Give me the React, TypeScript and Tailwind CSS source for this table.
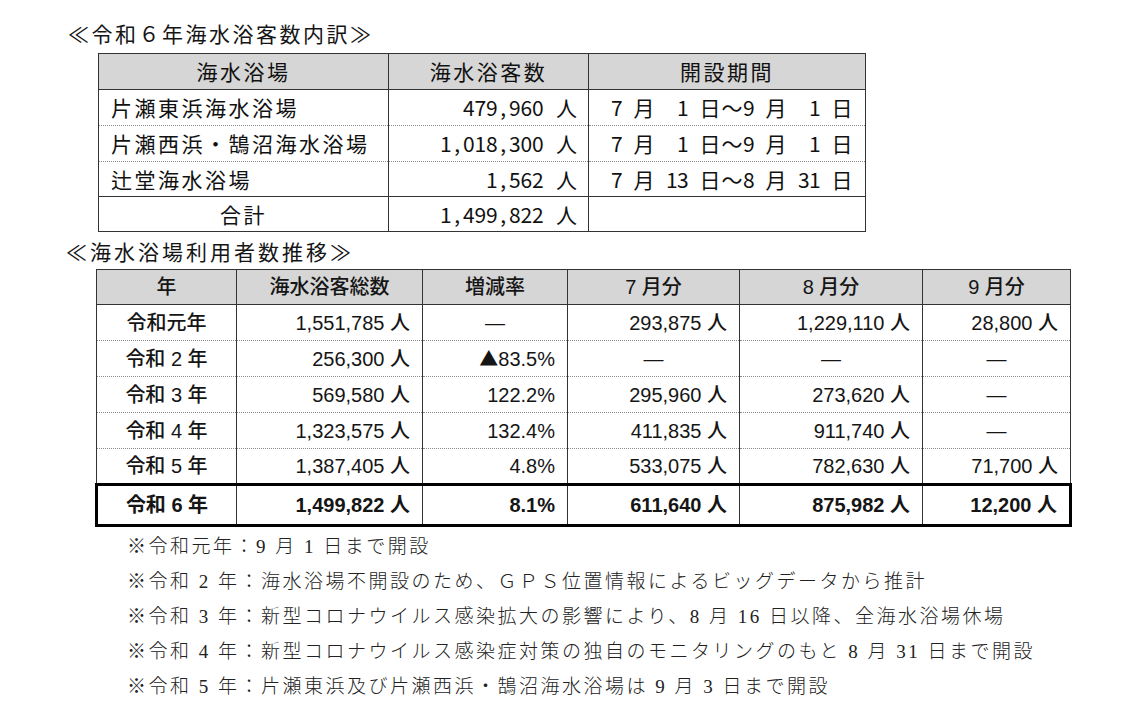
import React from "react";

const jp = "font-['Noto_Sans_CJK_JP',sans-serif]";

// half-width chars in an 11.5px box, full-width in 23px (like a mono gothic)
const Mono = ({ text }: { text: string }) => (
  <span className="inline-flex">
    {Array.from(text).map((c, i) => (
      <span
        key={i}
        className={c.charCodeAt(0) < 256 ? "w-[11.5px] text-center" : "w-[23px] text-center"}
      >
        {c === " " ? "\u00a0" : c}
      </span>
    ))}
  </span>
);

const MonoDate = ({ text }: { text: string }) => (
  <span className="inline-flex">
    {Array.from(text).map((c, i) => (
      <span
        key={i}
        className={c.charCodeAt(0) < 256 ? "w-[11px] text-center" : "w-[22px] text-center"}
      >
        {c === " " ? "\u00a0" : c}
      </span>
    ))}
  </span>
);

const breakdown = [
  { name: "片瀬東浜海水浴場", count: "479,960 人", period: "7 月  1 日～9 月  1 日" },
  { name: "片瀬西浜・鵠沼海水浴場", count: "1,018,300 人", period: "7 月  1 日～9 月  1 日" },
  { name: "辻堂海水浴場", count: "1,562 人", period: "7 月 13 日～8 月 31 日" },
];

const trend = [
  ["令和元年", "1,551,785 人", "—", "293,875 人", "1,229,110 人", "28,800 人"],
  ["令和 2 年", "256,300 人", "▲83.5%", "—", "—", "—"],
  ["令和 3 年", "569,580 人", "122.2%", "295,960 人", "273,620 人", "—"],
  ["令和 4 年", "1,323,575 人", "132.4%", "411,835 人", "911,740 人", "—"],
  ["令和 5 年", "1,387,405 人", "4.8%", "533,075 人", "782,630 人", "71,700 人"],
];
const latest = ["令和 6 年", "1,499,822 人", "8.1%", "611,640 人", "875,982 人", "12,200 人"];

const notes = [
  "※令和元年：9 月 1 日まで開設",
  "※令和 2 年：海水浴場不開設のため、ＧＰＳ位置情報によるビッグデータから推計",
  "※令和 3 年：新型コロナウイルス感染拡大の影響により、8 月 16 日以降、全海水浴場休場",
  "※令和 4 年：新型コロナウイルス感染症対策の独自のモニタリングのもと 8 月 31 日まで開設",
  "※令和 5 年：片瀬東浜及び片瀬西浜・鵠沼海水浴場は 9 月 3 日まで開設",
];

const cellAlign = (v: string, col: number) => {
  if (col === 0) return "text-center";
  if (v === "—") return "text-center";
  return "text-right pr-[12px]";
};

const Value = ({ v }: { v: string }) =>
  v.startsWith("▲") ? (
    <>
      <span className={`${jp} text-[19px]`}>▲</span>
      {v.slice(1)}
    </>
  ) : (
    <>{v}</>
  );

export default function App() {
  return (
    <div className={`w-[1140px] h-[702px] overflow-hidden bg-white text-[#151515] ${jp}`}>
      <div className="h-[53px] pt-[20px] pl-[68px] text-[21px] leading-[26px] tracking-[2.5px]">
        ≪令和６年海水浴客数内訳≫
      </div>

      <table className="ml-[98px] w-[767px] table-fixed border-collapse text-[21px] leading-none text-[#111]">
        <colgroup>
          <col className="w-[290px]" />
          <col className="w-[200px]" />
          <col className="w-[277px]" />
        </colgroup>
        <thead>
          <tr className="h-[36px] bg-[#d6d6d6] tracking-[2.5px]">
            <th className="border border-[#333] font-normal">海水浴場</th>
            <th className="border border-[#333] font-normal">海水浴客数</th>
            <th className="border border-[#333] font-normal">開設期間</th>
          </tr>
        </thead>
        <tbody>
          {breakdown.map((r, i) => {
            const bottom =
              i < breakdown.length - 1
                ? "border-b border-b-[#8a8a8a] [border-bottom-style:dotted]"
                : "border-b border-b-[#333]";
            return (
              <tr key={r.name} className={i < 2 ? "h-[36px]" : "h-[35px]"}>
                <td className={`border-x border-x-[#333] ${bottom} pl-[12px] tracking-[2.5px]`}>{r.name}</td>
                <td className={`border-x border-x-[#333] ${bottom} pr-[10px] text-right`}>
                  <Mono text={r.count} />
                </td>
                <td className={`border-x border-x-[#333] ${bottom} pl-[22px]`}>
                  <MonoDate text={r.period} />
                </td>
              </tr>
            );
          })}
          <tr className="h-[35px]">
            <td className="border border-[#333] text-center tracking-[2.5px]">合計</td>
            <td className="border border-[#333] pr-[10px] text-right">
              <Mono text="1,499,822 人" />
            </td>
            <td className="border border-[#333]"></td>
          </tr>
        </tbody>
      </table>

      <div className="mt-[6px] h-[26px] pl-[66px] text-[21px] leading-[26px] tracking-[3px]">
        ≪海水浴場利用者数推移≫
      </div>

      <table className="mt-[5px] ml-[95px] w-[974px] table-fixed border-collapse font-['Liberation_Sans','Noto_Sans_CJK_JP',sans-serif] text-[20px] leading-none font-medium">
        <colgroup>
          <col className="w-[140px]" />
          <col className="w-[186px]" />
          <col className="w-[145px]" />
          <col className="w-[172px]" />
          <col className="w-[183px]" />
          <col className="w-[148px]" />
        </colgroup>
        <thead>
          <tr className="h-[35px] bg-[#d6d6d6]">
            {["年", "海水浴客総数", "増減率", "7 月分", "8 月分", "9 月分"].map((h) => (
              <th key={h} className="border border-[#333] font-medium">
                {h}
              </th>
            ))}
          </tr>
        </thead>
        <tbody>
          {trend.map((r) => (
            <tr key={r[0]} className="h-[36px]">
              {r.map((v, j) => (
                <td
                  key={j}
                  className={`border-x border-x-[#333] border-b border-b-[#8a8a8a] [border-bottom-style:dotted] ${cellAlign(v, j)}`}
                >
                  <Value v={v} />
                </td>
              ))}
            </tr>
          ))}
          <tr className="h-[41px] font-bold">
            {latest.map((v, j) => (
              <td
                key={j}
                className={`border-x border-x-[#333] border-y-[3px] border-y-black ${
                  j === 0 ? "border-l-[3px] border-l-black" : ""
                } ${j === latest.length - 1 ? "border-r-[3px] border-r-black" : ""} ${cellAlign(v, j)}`}
              >
                {v}
              </td>
            ))}
          </tr>
        </tbody>
      </table>

      <div className="pt-[2px] pl-[127px] font-['Liberation_Serif','Noto_Sans_CJK_JP',serif] text-[19px] leading-[35px] tracking-[2.5px] font-light text-[#222]">
        {notes.map((n) => (
          <div key={n}>{n}</div>
        ))}
      </div>
    </div>
  );
}
